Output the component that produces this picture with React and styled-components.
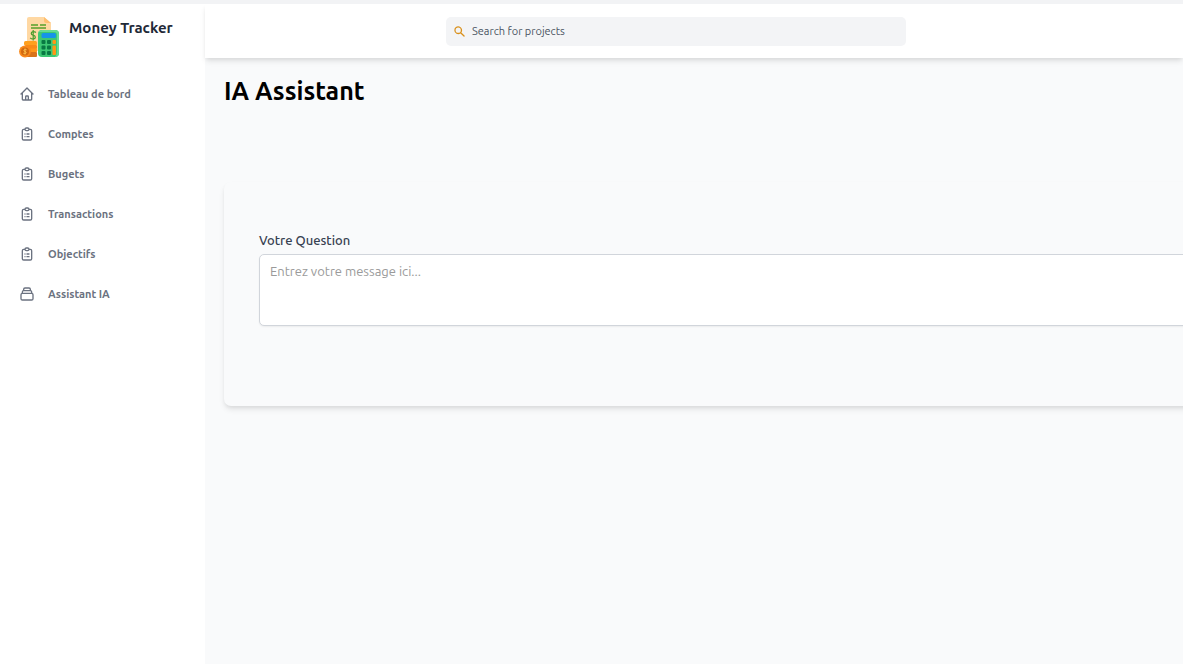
import React from "react";
import styled, { createGlobalStyle } from "styled-components";

const GlobalStyle = createGlobalStyle`
  *, *::before, *::after { box-sizing: border-box; }
  body {
    margin: 0;
    background: #f9fafb;
    color: #000;
    font-family: Ubuntu, "Noto Sans", "Open Sans", sans-serif;
  }
`;

const Page = styled.div`
  display: flex;
  min-height: 100vh;
  border-top: 4px solid #f2f3f5;
  overflow: hidden;
`;

const Sidebar = styled.aside`
  flex: 0 0 205px;
  background: #fff;
`;

const Brand = styled.a`
  display: flex;
  gap: 9px;
  padding: 12px 18px 0;
  color: #1f2937;
  font-size: 15px;
  line-height: 24px;
  font-weight: 600;
  text-decoration: none;
  white-space: nowrap;
`;

const Logo = styled.svg`
  flex: none;
  width: 42px;
  height: 42px;
`;

const NavList = styled.ul`
  list-style: none;
  margin: 16px 0 0;
  padding: 0;
`;

const NavLink = styled.a`
  display: flex;
  align-items: center;
  gap: 13px;
  height: 40px;
  padding: 0 19px;
  color: #6b7280;
  font-size: 11px;
  line-height: 16px;
  font-weight: 700;
  text-decoration: none;
`;

const NavIcon = styled.svg`
  width: 16px;
  height: 16px;
  fill: none;
  stroke: currentColor;
  stroke-width: 2;
  stroke-linecap: round;
  stroke-linejoin: round;
`;

const Column = styled.div`
  flex: 1;
  min-width: 0;
  display: flex;
  flex-direction: column;
`;

const Header = styled.header`
  display: flex;
  justify-content: center;
  height: 54px;
  padding: 13px 56px 12px 20px;
  background: #fff;
  box-shadow: 0 4px 6px -1px rgba(0, 0, 0, 0.1), 0 2px 4px -1px rgba(0, 0, 0, 0.06);
`;

const Search = styled.label`
  display: flex;
  align-items: center;
  gap: 6px;
  width: 51%;
  padding: 0 7px 1px;
  border-radius: 5px;
  background: #f3f4f6;
`;

const SearchIcon = styled.svg`
  flex: none;
  width: 13px;
  height: 13px;
  fill: #d9901a;
`;

const SearchInput = styled.input`
  flex: 1;
  min-width: 0;
  height: 16px;
  padding: 0;
  border: 0;
  outline: 0;
  background: transparent;
  color: #374151;
  font: inherit;
  font-size: 11px;
  line-height: 16px;

  &::placeholder { color: #4b5563; opacity: 1; }
`;

const Main = styled.main`
  padding: 16px 0 40px 19px;
`;

const Title = styled.h1`
  margin: 0;
  font-size: 25px;
  line-height: 34px;
  font-weight: 600;
`;

const Card = styled.form`
  margin: 74px -20px 0 0;
  padding: 48px 0 80px 35px;
  border-radius: 7px;
  background: #f9fafb;
  box-shadow: 0 4px 6px -1px rgba(0, 0, 0, 0.1), 0 2px 4px -1px rgba(0, 0, 0, 0.06);
`;

const FieldLabel = styled.label`
  display: block;
  margin-bottom: 4px;
  color: #374151;
  font-size: 13px;
  line-height: 20px;
  font-weight: 500;
`;

const MessageBox = styled.textarea`
  display: block;
  width: 100%;
  height: 72px;
  padding: 6px 10px;
  border: 1px solid #d1d5db;
  border-radius: 5px;
  outline: 0;
  background: #fff;
  box-shadow: 0 1px 2px rgba(0, 0, 0, 0.06);
  color: #374151;
  font: inherit;
  font-size: 13px;
  line-height: 20px;
  resize: none;

  &::placeholder { color: #9a9a9a; opacity: 1; }
`;

const HOME =
  "M3 12l2-2m0 0l7-7 7 7M5 10v10a1 1 0 001 1h3m10-11l2 2m-2-2v10a1 1 0 01-1 1h-3m-6 0a1 1 0 001-1v-4a1 1 0 011-1h2a1 1 0 011 1v4a1 1 0 001 1m-6 0h6";
const CLIPBOARD =
  "M9 5H7a2 2 0 00-2 2v12a2 2 0 002 2h10a2 2 0 002-2V7a2 2 0 00-2-2h-2M9 5a2 2 0 002 2h2a2 2 0 002-2M9 5a2 2 0 012-2h2a2 2 0 012 2m-3 7h3m-3 4h3m-6-4h.01M9 16h.01";
const COLLECTION =
  "M19 11H5m14 0a2 2 0 012 2v6a2 2 0 01-2 2H5a2 2 0 01-2-2v-6a2 2 0 012-2m14 0V9a2 2 0 00-2-2M5 11V9a2 2 0 012-2m0 0V5a2 2 0 012-2h6a2 2 0 012 2v2M7 7h10";

const NAV_ITEMS = [
  { label: "Tableau de bord", icon: HOME },
  { label: "Comptes", icon: CLIPBOARD },
  { label: "Bugets", icon: CLIPBOARD },
  { label: "Transactions", icon: CLIPBOARD },
  { label: "Objectifs", icon: CLIPBOARD },
  { label: "Assistant IA", icon: COLLECTION },
];

function MoneyLogo() {
  return (
    <Logo viewBox="0 0 42 42" aria-hidden="true">
      <path d="M11 1h15l7 6v28H9V3q0-2 2-2z" fill="#ffd8a3" />
      <path d="M26 1l7 6h-5q-2 0-2-2z" fill="#ffbf70" />
      <path d="M13 9h7m2 0h6M13 12h15" stroke="#55a02c" strokeWidth="1.4" fill="none" />
      <path
        d="M18 16.500q-1.500-1.200-3.200-.8c-2.200.6-2 2.900.2 3.400 3.200.7 3 3.500.2 3.900q-1.900.1-3-1.100M15.200 14v10.500"
        stroke="#4b9c2c"
        strokeWidth="1.200"
        fill="none"
      />
      <rect x="6" y="25" width="13" height="4.500" rx="1.500" fill="#ffa01e" />
      <rect x="7" y="29" width="12" height="4" rx="1" fill="#f98a17" />
      <rect x="6" y="32.500" width="13" height="4" rx="1" fill="#ff9819" />
      <rect x="8" y="36" width="11" height="5" rx="1" fill="#d9731a" />
      <circle cx="7" cy="35.500" r="5.900" fill="#f98a1c" />
      <circle cx="7" cy="35.500" r="4" fill="#d26a10" />
      <path
        d="M8.600 33.800c-2-1.300-4 .9-1.600 1.700 2.500.8.500 3-1.700 1.700M7 32.500v6"
        stroke="#ffc04d"
        strokeWidth="1"
        fill="none"
      />
      <rect x="20" y="14" width="21" height="27" rx="4" fill="#3dc873" />
      <path d="M24 14h13q4 0 4 4v19q0 4-4 4 2-2 2-5V19q0-3-3-3H20.500q1-2 3.500-2z" fill="#65dc93" />
      <rect x="23.500" y="17" width="14.500" height="5" rx="1.500" fill="#1594e8" />
      <g fill="#087a43">
        <rect x="23.500" y="24" width="4" height="4" rx="1" />
        <rect x="29" y="24" width="4" height="4" rx="1" />
        <rect x="23.500" y="29.500" width="4" height="4" rx="1" />
        <rect x="29" y="29.500" width="4" height="4" rx="1" />
        <rect x="23.500" y="35" width="4" height="4" rx="1" />
        <rect x="29" y="35" width="4" height="4" rx="1" />
      </g>
      <rect x="34.500" y="24" width="3.500" height="4" rx="1" fill="#ff9615" />
      <rect x="34.500" y="29.500" width="3.500" height="9.500" rx="1" fill="#ff9615" />
    </Logo>
  );
}

export default function App() {
  return (
    <>
      <GlobalStyle />
      <Page>
        <Sidebar>
          <Brand href="#">
            <MoneyLogo />
            <span>Money Tracker</span>
          </Brand>
          <nav>
            <NavList>
              {NAV_ITEMS.map(({ label, icon }) => (
                <li key={label}>
                  <NavLink href="#">
                    <NavIcon viewBox="0 0 24 24" aria-hidden="true">
                      <path d={icon} />
                    </NavIcon>
                    {label}
                  </NavLink>
                </li>
              ))}
            </NavList>
          </nav>
        </Sidebar>
        <Column>
          <Header>
            <Search>
              <SearchIcon viewBox="0 0 20 20" aria-hidden="true">
                <path
                  fillRule="evenodd"
                  clipRule="evenodd"
                  d="M8 4a4 4 0 100 8 4 4 0 000-8zM2 8a6 6 0 1110.890 3.476l4.817 4.817a1 1 0 01-1.414 1.414l-4.816-4.816A6 6 0 012 8z"
                />
              </SearchIcon>
              <SearchInput type="text" aria-label="Search for projects" placeholder="Search for projects" />
            </Search>
          </Header>
          <Main>
            <Title>IA Assistant</Title>
            <Card>
              <FieldLabel htmlFor="message">Votre Question</FieldLabel>
              <MessageBox id="message" placeholder="Entrez votre message ici..." />
            </Card>
          </Main>
        </Column>
      </Page>
    </>
  );
}
